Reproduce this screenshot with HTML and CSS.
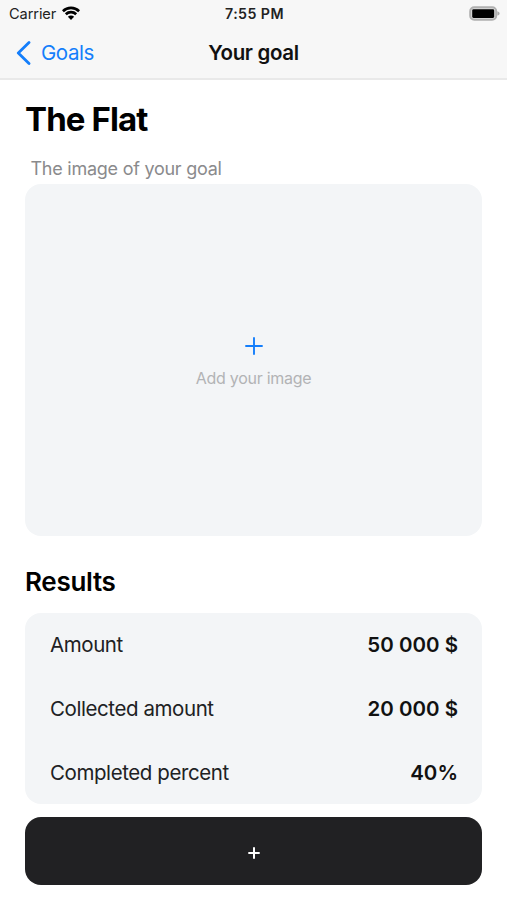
FILE: index.html
```html
<!DOCTYPE html>
<html lang="en">
<head>
<meta charset="utf-8">
<title>Your goal</title>
<link rel="stylesheet" href="styles.css">
</head>
<body>
<header class="top">
  <div class="status">
    <div class="carrier"><span>Carrier</span>
      <svg class="wifi" width="18" height="14" viewBox="0 0 18 14"><g fill="none" stroke="#000" stroke-width="2.7"><path d="M.9 5.2a11.6 11.6 0 0 1 16.2 0"/><path d="M3.8 8.3a7.5 7.5 0 0 1 10.4 0"/></g><path d="M9 13.9 5.9 10.8a4.4 4.4 0 0 1 6.2 0z"/></svg>
    </div>
    <time class="clock">7:55 PM</time>
    <svg class="battery" width="31" height="15" viewBox="0 0 31 15"><rect x="1.2" y="1.2" width="26" height="12.6" rx="4" fill="#ddd" stroke="#b0b0b0" stroke-width="2"/><rect x="3.2" y="3.3" width="22" height="8.6" rx="1.3"/><path d="M28.4 5.2c2.9.8 2.9 3.6 0 4.4z" fill="#aaa"/></svg>
  </div>
  <nav class="nav">
    <a class="back"><svg width="15" height="24" viewBox="0 0 15 24"><path d="M13 1.5 2.3 12 13 22.5" fill="none" stroke="#147efb" stroke-width="2.8" stroke-linecap="round" stroke-linejoin="round"/></svg><span>Goals</span></a>
    <h1 class="nav-title">Your goal</h1>
    <span></span>
  </nav>
</header>
<main class="content">
  <h2 class="name">The Flat</h2>
  <p class="caption">The image of your goal</p>
  <section class="picture">
    <svg width="18" height="18" viewBox="0 0 18 18"><path d="M9 1v16M1 9h16" stroke="#147efb" stroke-width="1.9" stroke-linecap="round"/></svg>
    <span class="hint">Add your image</span>
  </section>
  <h3 class="heading">Results</h3>
  <dl class="results">
    <div class="row"><dt>Amount</dt><dd>50 000 $</dd></div>
    <div class="row"><dt>Collected amount</dt><dd>20 000 $</dd></div>
    <div class="row"><dt>Completed percent</dt><dd>40%</dd></div>
  </dl>
  <button class="add" aria-label="Add"><svg width="12" height="12" viewBox="0 0 12 12"><path d="M6 .3v11.4M.3 6h11.4" stroke="#fff" stroke-width="2"/></svg></button>
</main>
</body>
</html>
```
FILE: styles.css
```css
* { box-sizing: border-box; }
body, h1, h2, h3, p, dl, dd { margin: 0; }
body { height: 900px; background: #fff; color: #000; font-family: Inter, "Liberation Sans", sans-serif; }
.top { height: 80px; background: #f7f7f7; border-bottom: 2px solid #e9e9e9; }
.status { display: grid; grid-template-columns: 1fr auto 1fr; align-items: center; height: 27px; padding: 0 7px 0 9px; color: #222; font-size: 14.6px; }
.carrier { display: flex; align-items: center; gap: 6px; letter-spacing: -.1px; }
.wifi { display: block; margin-top: -2px; }
.clock { font-weight: 600; font-size: 14.2px; letter-spacing: .45px; }
.battery { justify-self: end; margin-top: -1px; }
.nav { display: grid; grid-template-columns: 1fr auto 1fr; align-items: center; height: 51px; padding: 0 16px; }
.back { display: flex; align-items: center; gap: 10px; color: #147efb; font-size: 20.5px; letter-spacing: -.45px; }
.nav-title { font-size: 20.5px; font-weight: 600; color: #111; letter-spacing: -.35px; }
.content { display: flex; flex-direction: column; padding: 0 25px; }
.name { margin-top: 19px; font-size: 33px; line-height: 40px; font-weight: 700; letter-spacing: -.9px; }
.caption { margin: 18px 0 3px 5.5px; font-size: 18px; line-height: 24px; color: #8a8a8c; letter-spacing: -.25px; }
.picture { display: flex; flex-direction: column; align-items: center; height: 352px; padding-top: 153px; border-radius: 16px; background: #f3f5f7; }
.hint { margin-top: 12px; font-size: 16px; line-height: 22px; color: #b2b3b5; letter-spacing: -.27px; }
.heading { margin-top: 30px; font-size: 26px; line-height: 32px; font-weight: 600; letter-spacing: -.3px; }
.results { margin-top: 15px; height: 191px; padding: 0 24px 0 25px; border-radius: 16px; background: #f3f5f7; }
.row { display: flex; align-items: center; justify-content: space-between; height: 64px; padding-bottom: 1.5px; font-size: 20.5px; color: #202123; }
.row dt { letter-spacing: -.42px; }
.row dd { font-weight: 600; color: #111; }
.add { display: flex; align-items: center; justify-content: center; height: 68px; margin-top: 13px; padding: 4px 0 0; border: 0; border-radius: 16px; background: #212123; }
```
